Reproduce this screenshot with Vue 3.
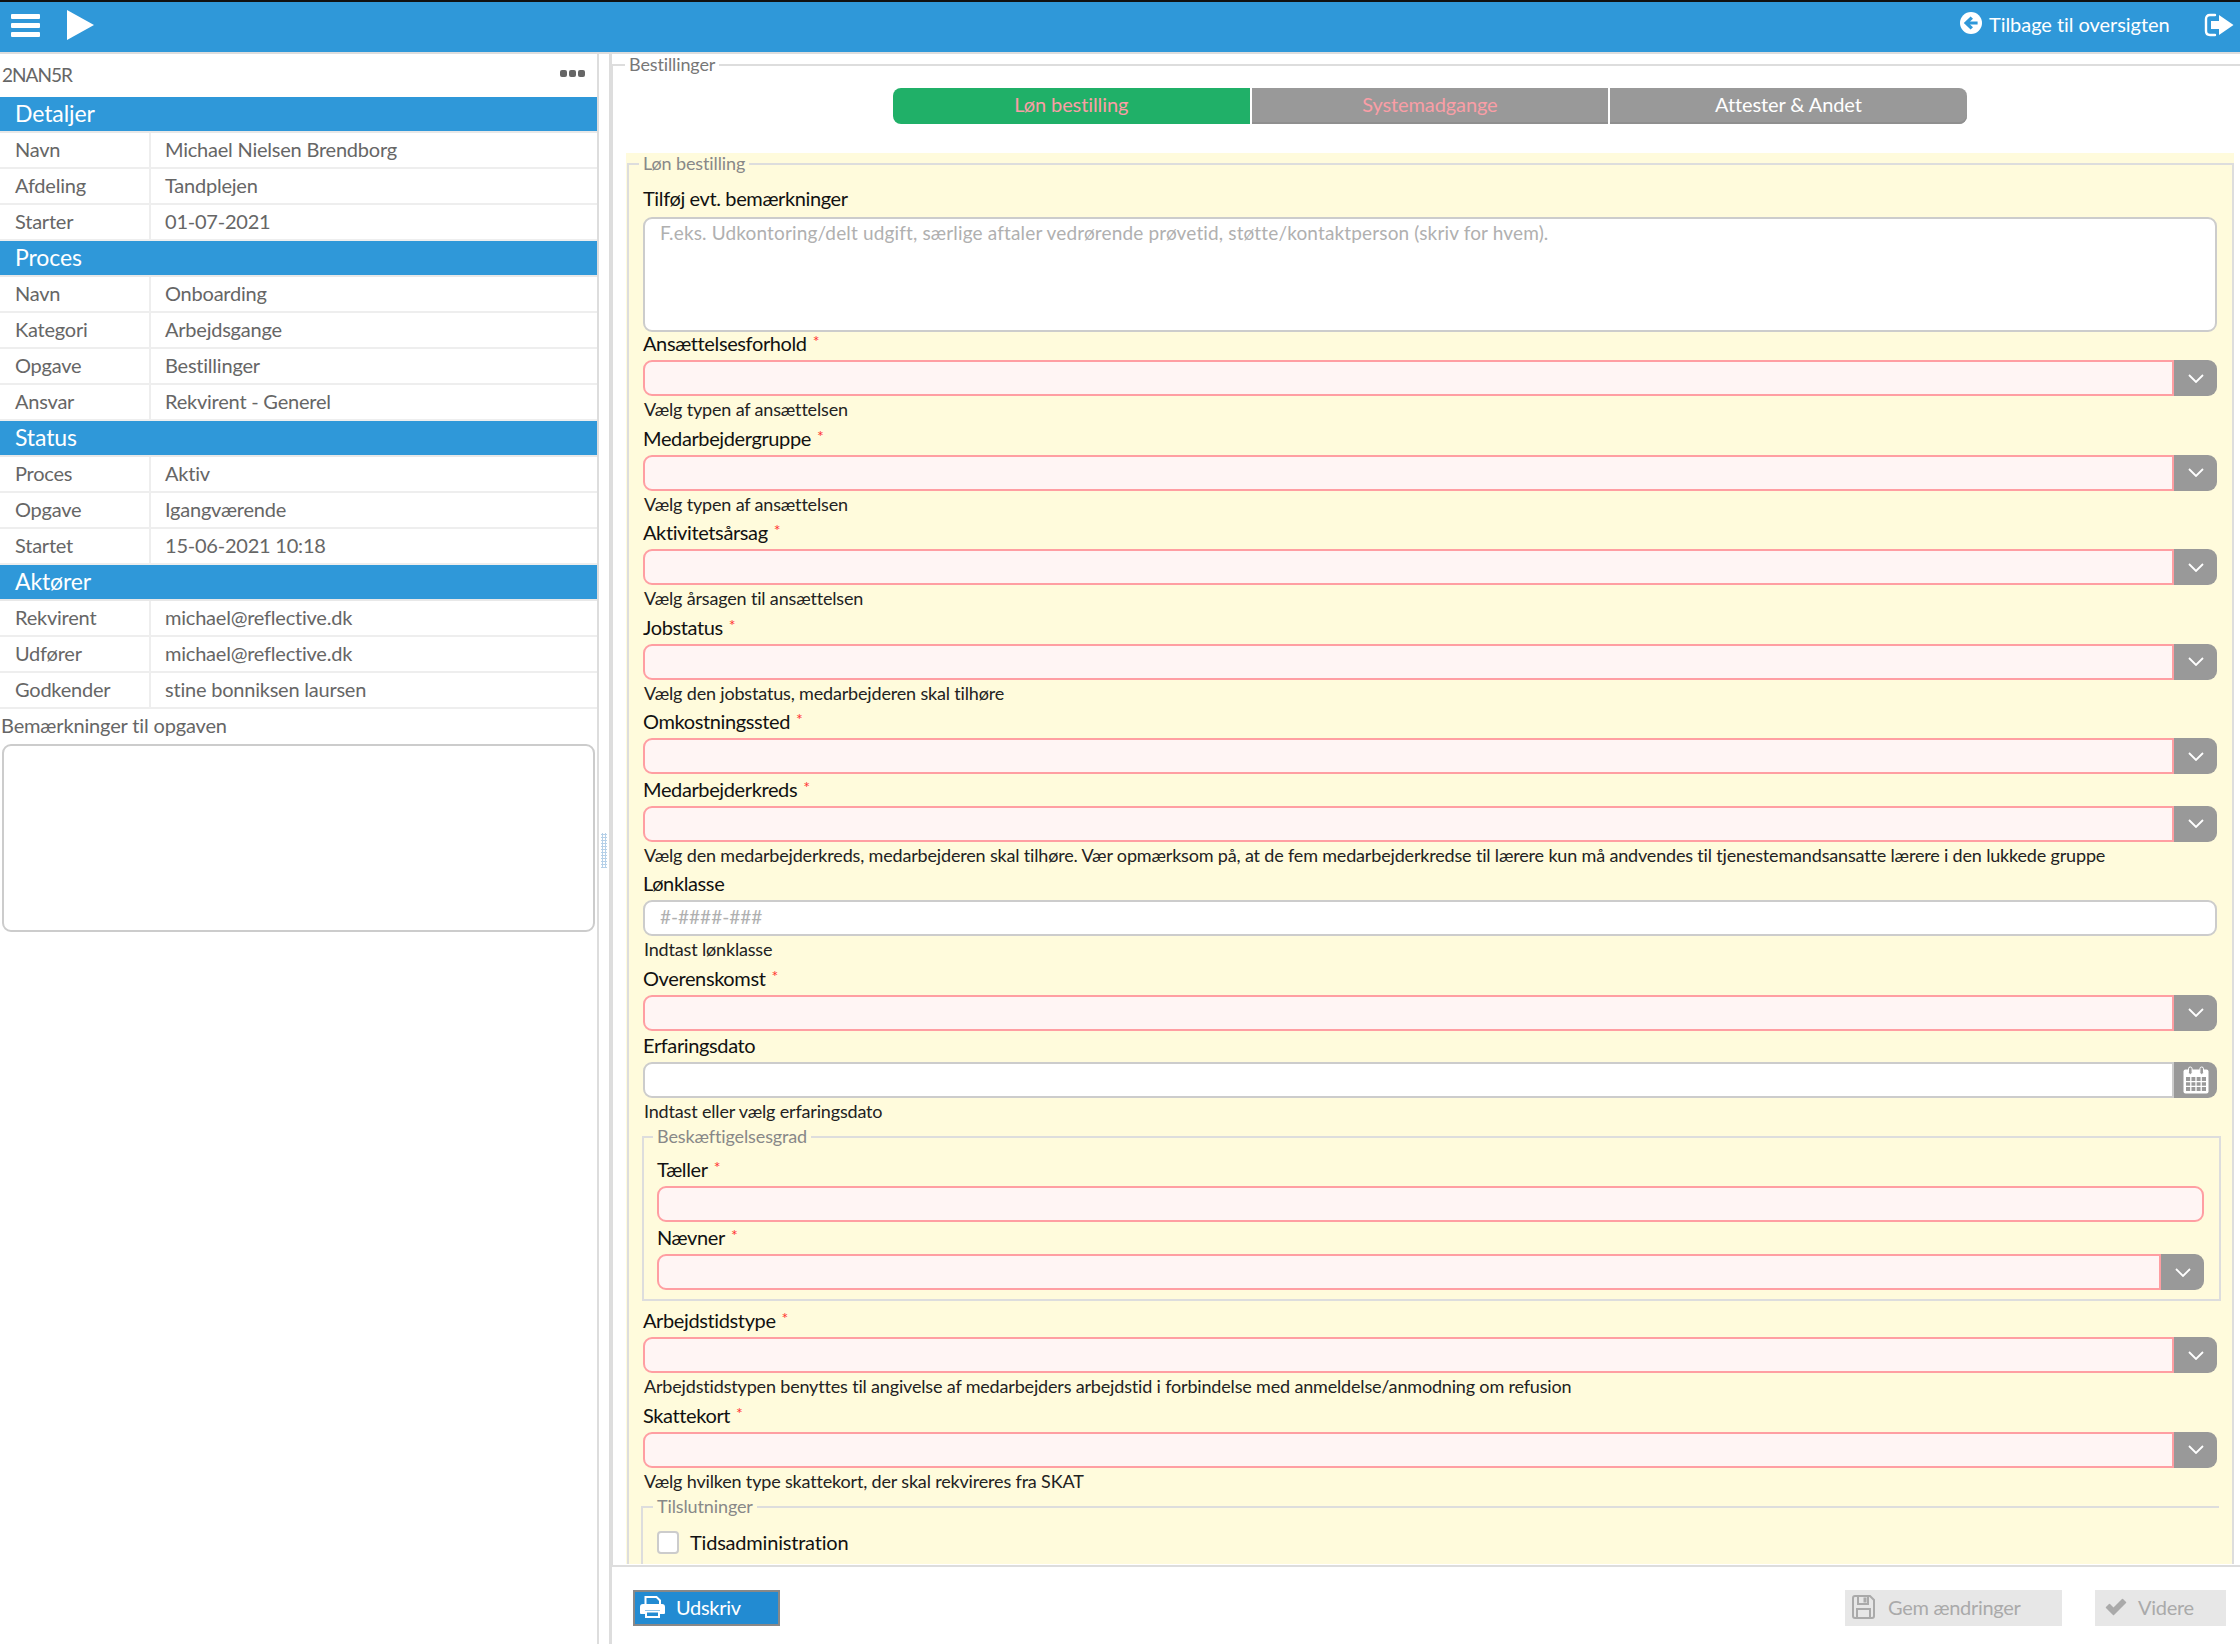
<template>
  <div class="app">
    <header class="topbar">
      <div class="topbar-left">
        <div class="burger"><span></span><span></span><span></span></div>
        <svg class="play" viewBox="0 0 27 30"><polygon points="0,0 27,15 0,30" fill="#fff" /></svg>
      </div>
      <div class="topbar-right">
        <svg class="back-icon" viewBox="0 0 22 22">
          <circle cx="11" cy="11" r="11" fill="#fff" />
          <path d="M3.8 11 L10.6 4.4 L13 6.8 L10 9.4 H17.6 V12.6 H10 L13 15.2 L10.6 17.6 Z" fill="#2f98d9" />
        </svg>
        <span class="back-text">Tilbage til oversigten</span>
        <svg class="exit-icon" viewBox="0 0 30 24">
          <path d="M11 2 H6 Q2 2 2 6 V18 Q2 22 6 22 H11" fill="none" stroke="#fff" stroke-width="2.4" stroke-linecap="round" />
          <path d="M7 8 H15 V2 L29.5 12 L15 22 V16 H7 Z" fill="#fff" />
        </svg>
      </div>
    </header>

    <div class="body">
      <aside class="sidebar">
        <div class="side-top">
          <span class="case-no">2NAN5R</span>
          <div class="dots"><i></i><i></i><i></i></div>
        </div>
        <template v-for="section in sections" :key="section.title">
          <div class="side-head">{{ section.title }}</div>
          <div class="side-row" v-for="row in section.rows" :key="row[0]">
            <div class="side-key">{{ row[0] }}</div>
            <div class="side-val">{{ row[1] }}</div>
          </div>
        </template>
        <div class="note-label">Bemærkninger til opgaven</div>
        <textarea class="note"></textarea>
      </aside>

      <div class="splitter"><div class="grip"></div></div>

      <main class="main">
        <fieldset class="outer">
          <legend>Bestillinger</legend>
          <div class="tabs">
            <div class="tab active">Løn bestilling</div>
            <div class="tab warn">Systemadgange</div>
            <div class="tab">Attester &amp; Andet</div>
          </div>
          <div class="yellow">
            <fieldset class="form">
              <legend>Løn bestilling</legend>
              <label class="label first">Tilføj evt. bemærkninger</label>
              <textarea class="remarks" placeholder="F.eks. Udkontoring/delt udgift, særlige aftaler vedrørende prøvetid, støtte/kontaktperson (skriv for hvem)."></textarea>

              <div class="field" v-for="f in fieldsTop" :key="f.label" :class="{ bare: !f.help }">
                <label class="label">{{ f.label }}<em v-if="f.req">*</em></label>
                <div class="control" :class="{ invalid: f.req }">
                  <input :placeholder="f.placeholder" />
                  <div class="addon" v-if="f.kind === 'select'">
                    <svg class="chevron" viewBox="0 0 16 9"><path d="M1 1 L8 8 L15 1" fill="none" stroke="#fff" stroke-width="1.8" /></svg>
                  </div>
                  <div class="addon" v-if="f.kind === 'date'">
                    <svg class="calendar" viewBox="0 0 26 28">
                      <path d="M2.5 3.5 H23.5 Q25.5 3.5 25.5 5.5 V25.5 Q25.5 27.5 23.5 27.5 H2.5 Q0.5 27.5 0.5 25.5 V5.5 Q0.5 3.5 2.5 3.5 Z" fill="#fff" />
                      <path d="M3 11 H23 V25 H3 Z" fill="#999" />
                      <path d="M3 15.6 H23 M3 20.3 H23 M7.8 11 V25 M13 11 V25 M18.2 11 V25" stroke="#fff" stroke-width="1.3" />
                      <rect x="5.5" y="1" width="3.6" height="7.4" rx="1.8" fill="#999" stroke="#fff" stroke-width="1" />
                      <rect x="16.9" y="1" width="3.6" height="7.4" rx="1.8" fill="#999" stroke="#fff" stroke-width="1" />
                    </svg>
                  </div>
                </div>
                <div class="help" v-if="f.help">{{ f.help }}</div>
              </div>

              <fieldset class="sub grade">
                <legend>Beskæftigelsesgrad</legend>
                <label class="label">Tæller<em>*</em></label>
                <div class="control invalid"><input /></div>
                <label class="label second">Nævner<em>*</em></label>
                <div class="control invalid">
                  <input />
                  <div class="addon">
                    <svg class="chevron" viewBox="0 0 16 9"><path d="M1 1 L8 8 L15 1" fill="none" stroke="#fff" stroke-width="1.8" /></svg>
                  </div>
                </div>
              </fieldset>

              <div class="field" v-for="f in fieldsBottom" :key="f.label">
                <label class="label">{{ f.label }}<em>*</em></label>
                <div class="control invalid">
                  <input />
                  <div class="addon">
                    <svg class="chevron" viewBox="0 0 16 9"><path d="M1 1 L8 8 L15 1" fill="none" stroke="#fff" stroke-width="1.8" /></svg>
                  </div>
                </div>
                <div class="help">{{ f.help }}</div>
              </div>

              <fieldset class="sub links">
                <legend>Tilslutninger</legend>
                <div class="check-row">
                  <span class="checkbox"></span>
                  <span>Tidsadministration</span>
                </div>
              </fieldset>
            </fieldset>
          </div>
        </fieldset>

        <footer class="footer">
          <button class="btn print">
            <svg class="btn-icon" viewBox="0 0 25 22">
              <path d="M5.5 9 V1 H16.5 L20 4.5 V9" fill="none" stroke="#fff" stroke-width="2" />
              <path d="M3 8 H22 Q25 8 25 11 V17 Q25 18 24 18 H20 V14 H5 V18 H1 Q0 18 0 17 V11 Q0 8 3 8 Z" fill="#fff" />
              <path d="M6 15.5 H19 V21 H6 Z" fill="none" stroke="#fff" stroke-width="2" />
            </svg>
            <span>Udskriv</span>
          </button>
          <div class="footer-right">
            <button class="btn off save">
              <svg class="btn-icon" viewBox="0 0 23 24">
                <path d="M1 3 Q1 1 3 1 H18 L22 5 V21 Q22 23 20 23 H3 Q1 23 1 21 Z" fill="none" stroke="#aaa" stroke-width="2" />
                <path d="M6 1 V9 H16 V1 Z" fill="none" stroke="#aaa" stroke-width="2" />
                <rect x="11.5" y="2.5" width="3" height="5" fill="#aaa" />
                <path d="M5 23 V14 H18 V23" fill="none" stroke="#aaa" stroke-width="2" />
              </svg>
              <span>Gem ændringer</span>
            </button>
            <button class="btn off next">
              <svg class="btn-icon" viewBox="0 0 22 18"><path d="M1.5 9.5 L4.5 6.5 L8.5 10.5 L17.5 1.5 L20.5 4.5 L8.5 16.5 Z" fill="#aaa" stroke="#aaa" stroke-width="1.5" stroke-linejoin="round" /></svg>
              <span>Videre</span>
            </button>
          </div>
        </footer>
      </main>
    </div>
  </div>
</template>

<script setup>
const sections = [
  { title: 'Detaljer', rows: [['Navn', 'Michael Nielsen Brendborg'], ['Afdeling', 'Tandplejen'], ['Starter', '01-07-2021']] },
  { title: 'Proces', rows: [['Navn', 'Onboarding'], ['Kategori', 'Arbejdsgange'], ['Opgave', 'Bestillinger'], ['Ansvar', 'Rekvirent - Generel']] },
  { title: 'Status', rows: [['Proces', 'Aktiv'], ['Opgave', 'Igangværende'], ['Startet', '15-06-2021 10:18']] },
  { title: 'Aktører', rows: [['Rekvirent', 'michael@reflective.dk'], ['Udfører', 'michael@reflective.dk'], ['Godkender', 'stine bonniksen laursen']] },
]

const fieldsTop = [
  { label: 'Ansættelsesforhold', req: true, kind: 'select', help: 'Vælg typen af ansættelsen' },
  { label: 'Medarbejdergruppe', req: true, kind: 'select', help: 'Vælg typen af ansættelsen' },
  { label: 'Aktivitetsårsag', req: true, kind: 'select', help: 'Vælg årsagen til ansættelsen' },
  { label: 'Jobstatus', req: true, kind: 'select', help: 'Vælg den jobstatus, medarbejderen skal tilhøre' },
  { label: 'Omkostningssted', req: true, kind: 'select' },
  { label: 'Medarbejderkreds', req: true, kind: 'select', help: 'Vælg den medarbejderkreds, medarbejderen skal tilhøre. Vær opmærksom på, at de fem medarbejderkredse til lærere kun må andvendes til tjenestemandsansatte lærere i den lukkede gruppe' },
  { label: 'Lønklasse', kind: 'text', placeholder: '#-####-###', help: 'Indtast lønklasse' },
  { label: 'Overenskomst', req: true, kind: 'select' },
  { label: 'Erfaringsdato', kind: 'date', help: 'Indtast eller vælg erfaringsdato' },
]

const fieldsBottom = [
  { label: 'Arbejdstidstype', help: 'Arbejdstidstypen benyttes til angivelse af medarbejders arbejdstid i forbindelse med anmeldelse/anmodning om refusion' },
  { label: 'Skattekort', help: 'Vælg hvilken type skattekort, der skal rekvireres fra SKAT' },
]
</script>

<style>
html, body { margin: 0; background: #fff; }
</style>

<style scoped>
* { box-sizing: border-box; }
.app {
  width: 2240px;
  height: 1644px;
  overflow: hidden;
  display: flex;
  flex-direction: column;
  font-family: Lato, "Noto Sans", sans-serif;
  font-size: 20px;
  color: #666;
}

.topbar {
  height: 54px;
  flex: none;
  background: #2f98d9;
  border-top: 2px solid #111;
  border-bottom: 2px solid #ddd;
  display: flex;
  align-items: center;
  justify-content: space-between;
  color: #fff;
  padding-bottom: 4px;
}
.topbar-left { display: flex; align-items: center; gap: 27px; padding-left: 11px; }
.burger { display: flex; flex-direction: column; gap: 4px; width: 29px; }
.burger span { height: 5px; background: #fff; border-radius: 1px; }
.play { width: 27px; height: 30px; }
.topbar-right { display: flex; align-items: center; padding-right: 6px; }
.back-icon { width: 22px; height: 22px; margin-right: 7px; margin-top: -4px; }
.back-text { font-size: 20px; width: 215px; white-space: nowrap; letter-spacing: -0.05px; margin-top: -2px; }
.exit-icon { width: 30px; height: 24px; }

.body { flex: 1; display: flex; min-height: 0; }
.sidebar {
  width: 599px;
  flex: none;
  border-right: 2px solid #ddd;
  display: flex;
  flex-direction: column;
}
.side-top {
  height: 43px;
  flex: none;
  display: flex;
  align-items: center;
  justify-content: space-between;
  padding: 0 12px 0 2px;
}
.case-no { font-size: 19px; letter-spacing: -1px; margin-top: -3px; }
.dots { display: flex; gap: 2px; margin-top: -4px; }
.dots i { width: 7px; height: 7px; border-radius: 2px; background: #666; }
.side-head {
  height: 36px;
  flex: none;
  background: #2f98d9;
  border-bottom: 2px solid #e8e8e8;
  color: #fff;
  font-size: 23px;
  line-height: 32px;
  padding-left: 15px;
  letter-spacing: -0.1px;
}
.side-row {
  height: 36px;
  flex: none;
  display: flex;
  border-bottom: 2px solid #eee;
  line-height: 33px;
  letter-spacing: -0.22px;
}
.side-key { width: 151px; padding-left: 15px; border-right: 2px solid #eee; }
.side-val { padding-left: 14px; }
.note-label { padding: 4px 0 0 1px; height: 35px; flex: none; letter-spacing: -0.15px; line-height: 24px; }
.note {
  display: block;
  width: 593px;
  height: 188px;
  margin-left: 2px;
  flex: none;
  border: 2px solid #ccc;
  border-radius: 9px;
  background: #fff;
  resize: none;
  outline: none;
}

.splitter { width: 10px; flex: none; display: flex; align-items: flex-start; justify-content: center; padding-top: 779px; }
.grip {
  width: 6px;
  height: 35px;
  background-image: radial-gradient(circle at center, #b5d0e8 1.2px, transparent 1.3px);
  background-size: 3px 3px;
}

.main { flex: 1; min-width: 0; border-left: 3px solid #ddd; display: flex; flex-direction: column; }
fieldset { margin: 0; min-width: 0; }
legend { padding: 0 4px; height: 22px; line-height: 21px; color: #888; font-size: 18px; letter-spacing: -0.12px; }

.outer {
  height: 1511px;
  flex: none;
  overflow: hidden;
  border: 0;
  border-top: 2px solid #ddd;
  border-left: 1px solid #ddd;
  padding: 0 6px 0 13px;
}
.outer > legend { margin-left: -1px; color: #777; }
.tabs { display: flex; gap: 2px; margin: 12px 0 29px 267px; width: 1074px; }
.tab {
  height: 36px;
  width: 356.6px;
  background: #999;
  color: #fff;
  text-align: center;
  line-height: 32px;
  letter-spacing: -0.1px;
  box-shadow: inset 0 -2px 0 #8f8f8f;
}
.tab:first-child { border-radius: 8px 0 0 8px; }
.tab:last-child { border-radius: 0 8px 8px 0; }
.tab.active { background: #20b068; color: #fa9ea6; box-shadow: none; }
.tab.warn { color: #fa9ea6; }

.yellow { height: 1411px; overflow: hidden; background: #fffbdc; padding-left: 1px; }
.form {
  border: 2px solid #ddd;
  padding: 14px 15px 0 14px;
}
.form > legend { margin-left: -4px; }
.label {
  display: block;
  height: 28px;
  line-height: 23px;
  color: #111;
  letter-spacing: -0.38px;
}
.label.first { line-height: 19px; }
.label em {
  color: #f33;
  font-style: normal;
  font-size: 16px;
  margin-left: 6px;
  position: relative;
  top: -4px;
}
.remarks {
  display: block;
  width: 100%;
  height: 115px;
  border: 2px solid #ccc;
  border-radius: 9px;
  background: #fff;
  padding: 2px 15px;
  font: inherit;
  font-size: 19px;
  letter-spacing: 0.15px;
  resize: none;
  outline: none;
}
.remarks::placeholder, input::placeholder { color: #b0b0b0; opacity: 1; }
.field.bare { padding-bottom: 3.5px; }
.control { display: flex; height: 36px; }
.control input {
  flex: 1;
  min-width: 0;
  height: 36px;
  border: 2px solid #ccc;
  border-radius: 9px;
  background: #fff;
  padding: 0 15px 3px;
  font: inherit;
  font-size: 19px;
  outline: none;
}
.control input:not(:last-child) { border-radius: 9px 0 0 9px; }
.control.invalid input { background: #fff5f4; border-color: #ff9ea2; }
.addon {
  width: 43px;
  flex: none;
  background: #999;
  border-radius: 0 9px 9px 0;
  display: flex;
  align-items: center;
  justify-content: center;
}
.chevron { width: 16px; height: 9px; }
.calendar { width: 26px; height: 28px; }
.help {
  height: 30.5px;
  padding: 2px 0 0 1px;
  line-height: 22px;
  font-size: 18px;
  color: #222;
  letter-spacing: -0.17px;
  white-space: nowrap;
}

.sub { border: 2px solid #ddd; }
.sub > legend { margin-left: -4px; }
.grade {
  margin: -2.5px -4px 8px -1px;
  padding: 10px 15px 9px 13px;
}
.second { margin-top: 4px; }
.links {
  margin: -2px -2px 0 -2px;
  padding: 12px 0 0 14px;
  height: 80px;
  border-right: 0;
}
.check-row { display: flex; align-items: center; gap: 11px; color: #111; letter-spacing: -0.2px; }
.checkbox {
  width: 22px;
  height: 23px;
  border: 2px solid #ccc;
  border-radius: 4px;
  background: #fff;
}

.footer {
  flex: 1;
  border-top: 2px solid #ddd;
  display: flex;
  justify-content: space-between;
  align-items: flex-start;
  padding: 23px 14px 0 21px;
}
.footer-right { display: flex; gap: 33px; }
.btn {
  height: 36px;
  display: flex;
  align-items: center;
  border: 0;
  padding: 0 0 2px;
  font: inherit;
  letter-spacing: -0.3px;
}
.btn-icon { flex: none; }
.print {
  width: 147px;
  background: #228bd2;
  border: 2px solid #888;
  color: #fff;
  padding-left: 5px;
}
.print .btn-icon { width: 25px; height: 22px; margin-right: 11px; }
.off { background: #e7e7e7; color: #aaa; }
.save { width: 217px; padding-left: 7px; }
.save .btn-icon { width: 23px; height: 24px; margin-right: 13px; }
.next { width: 131px; padding-left: 10px; }
.next .btn-icon { width: 22px; height: 18px; margin-right: 11px; }
</style>
